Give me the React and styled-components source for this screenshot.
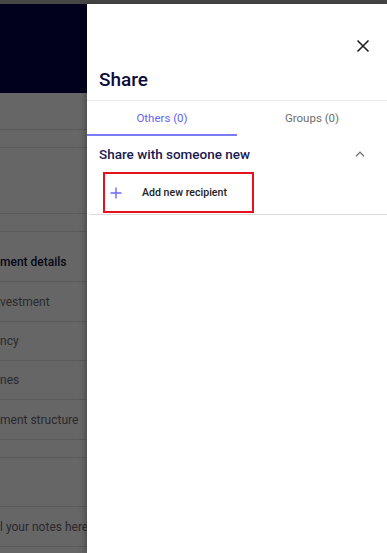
import React from "react";
import styled, { createGlobalStyle } from "styled-components";

const GlobalStyle = createGlobalStyle`
  html, body {
    margin: 0;
    padding: 0;
    width: 387px;
    height: 553px;
    overflow: hidden;
    font-family: Roboto, "Liberation Sans", Arial, sans-serif;
    background: #ffffff;
  }
`;

const Page = styled.div`
  position: relative;
  width: 387px;
  height: 553px;
  overflow: hidden;
  display: flex;
  flex-direction: column;
`;

const TopStrip = styled.div`
  height: 4px;
  flex-shrink: 0;
  background: #464646;
`;

const Header = styled.div`
  height: 89px;
  flex-shrink: 0;
  background: #03004a;
`;

const Row = styled.div`
  height: ${(p) => p.h}px;
  flex-shrink: 0;
  box-sizing: border-box;
  border-bottom: 1px solid #e2e2e6;
  display: flex;
  align-items: ${(p) => (p.bottom ? "flex-end" : "center")};
  padding-bottom: ${(p) => (p.bottom ? "12px" : "0")};
  font-size: 12px;
  font-weight: ${(p) => (p.bold ? 500 : 400)};
  color: ${(p) => (p.bold ? "#12123c" : "#6a6a72")};
  white-space: nowrap;
`;

const Backdrop = styled.div`
  position: absolute;
  inset: 4px 0 0 0;
  background: rgba(0, 0, 0, 0.6);
`;

const Drawer = styled.aside`
  position: absolute;
  top: 4px;
  right: 0;
  bottom: 0;
  width: 300px;
  background: #ffffff;
  box-shadow: -2px 0 6px rgba(0, 0, 0, 0.25);
  display: flex;
  flex-direction: column;
`;

const DrawerTop = styled.div`
  height: 64px;
  display: flex;
  justify-content: flex-end;
  align-items: flex-start;
  padding: 35px 17px 0 0;
  box-sizing: border-box;
`;

const CloseButton = styled.button`
  width: 14px;
  height: 14px;
  padding: 0;
  border: none;
  background: none;
  cursor: pointer;
  color: #1e1e1e;
  display: flex;
`;

const Title = styled.h2`
  margin: 0;
  padding: 0 12px;
  height: 32px;
  font-size: 19px;
  font-weight: 500;
  color: #0c0c3c;
  line-height: 24px;
  border-bottom: 1px solid #e8e8e8;
`;

const Tabs = styled.div`
  display: grid;
  grid-template-columns: 1fr 1fr;
  height: 35px;
`;

const Tab = styled.button`
  border: none;
  background: none;
  padding: 0;
  font-family: inherit;
  font-size: 11.5px;
  color: ${(p) => (p.active ? "#6464f4" : "#6e6e6e")};
  border-bottom: 2px solid ${(p) => (p.active ? "#7c7cf6" : "transparent")};
  cursor: pointer;
`;

const SectionHead = styled.div`
  display: flex;
  align-items: center;
  justify-content: space-between;
  padding: 0 22px 0 12px;
  height: 36px;
`;

const SectionTitle = styled.span`
  font-size: 13.5px;
  font-weight: 500;
  color: #1a1a50;
`;

const Chevron = styled.span`
  display: flex;
  color: #777;
`;

const Section = styled.div`
  border-bottom: 1px solid #dcdcdc;
  margin-left: 2px;
  padding: 0 0 1px 14px;
`;

const AddButton = styled.button`
  display: flex;
  align-items: center;
  width: 151px;
  height: 41px;
  box-sizing: border-box;
  border: 2px solid #e5121d;
  background: #fff;
  padding: 0 0 0 5px;
  gap: 20px;
  font-family: inherit;
  font-size: 10.6px;
  font-weight: 500;
  color: #222;
  cursor: pointer;
`;

const PlusIcon = () => (
  <svg width="12" height="12" viewBox="0 0 12 12">
    <path d="M6 0.5v11M0.5 6h11" stroke="#6a6af4" strokeWidth="1.4" fill="none" />
  </svg>
);

const rows = [
  { h: 37 },
  { h: 18 },
  { h: 66 },
  { h: 18 },
  { h: 50, text: "ment details", bold: true, bottom: true },
  { h: 40, text: "vestment" },
  { h: 39, text: "ncy" },
  { h: 39, text: "nes" },
  { h: 40, text: "ment structure" },
  { h: 18 },
  { h: 49 },
  { h: 40, text: "l your notes here," },
];

export default function App() {
  return (
    <>
      <GlobalStyle />
      <Page>
        <TopStrip />
        <Header />
        {rows.map((r, i) => (
          <Row key={i} h={r.h} bold={r.bold} bottom={r.bottom}>
            {r.text}
          </Row>
        ))}
        <Backdrop />
        <Drawer>
          <DrawerTop>
            <CloseButton aria-label="Close">
              <svg width="14" height="14" viewBox="0 0 14 14">
                <path d="M1.5 1.5l11 11M12.5 1.5l-11 11" stroke="currentColor" strokeWidth="1.6" />
              </svg>
            </CloseButton>
          </DrawerTop>
          <Title>Share</Title>
          <Tabs>
            <Tab active>Others (0)</Tab>
            <Tab>Groups (0)</Tab>
          </Tabs>
          <SectionHead>
            <SectionTitle>Share with someone new</SectionTitle>
            <Chevron>
              <svg width="10" height="6" viewBox="0 0 10 6">
                <path d="M1 5.2L5 1.2l4 4" stroke="currentColor" strokeWidth="1.3" fill="none" />
              </svg>
            </Chevron>
          </SectionHead>
          <Section>
            <AddButton>
              <PlusIcon />
              Add new recipient
            </AddButton>
          </Section>
        </Drawer>
      </Page>
    </>
  );
}
